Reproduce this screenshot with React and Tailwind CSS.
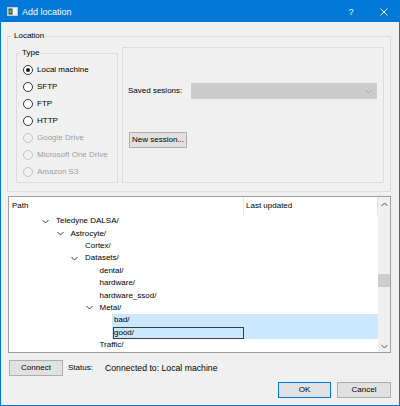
import React from "react";

const Chevron = ({ className = "", color = "#404040" }) => (
  <svg width="7" height="5" viewBox="0 0 7 5" className={className}>
    <polyline points="0.5,1 3.5,4 6.5,1" fill="none" stroke={color} strokeWidth="1" />
  </svg>
);

const ChevronUp = ({ color = "#404040" }) => (
  <svg width="7" height="5" viewBox="0 0 7 5">
    <polyline points="0.5,4 3.5,1 6.5,4" fill="none" stroke={color} strokeWidth="1" />
  </svg>
);

function Radio({ label, checked, disabled }) {
  return (
    <div className="flex h-[16.9px] items-center gap-[4px]">
      <span
        className={
          "flex h-[10px] w-[10px] items-center justify-center rounded-full border " +
          (disabled ? "border-[#c4c4c4]" : "border-[#333333] bg-white")
        }
      >
        {checked && <span className="h-[4px] w-[4px] rounded-full bg-[#1a1a1a]" />}
      </span>
      <span className={disabled ? "text-[#a0a0a0]" : "text-black"}>{label}</span>
    </div>
  );
}

const spacers = ["w-[33px]", "w-[47.5px]", "w-[62px]", "w-[76.5px]", "w-[91px]"];

const rows = [
  { level: 0, label: "Teledyne DALSA/", exp: true },
  { level: 1, label: "Astrocyte/", exp: true },
  { level: 2, label: "Cortex/" },
  { level: 2, label: "Datasets/", exp: true },
  { level: 3, label: "dental/" },
  { level: 3, label: "hardware/" },
  { level: 3, label: "hardware_ssod/" },
  { level: 3, label: "Metal/", exp: true },
  { level: 4, label: "bad/", sel: true },
  { level: 4, label: "good/", sel: true, edit: true },
  { level: 3, label: "Traffic/" },
];

export default function App() {
  return (
    <div className="flex h-[406px] w-[400px] flex-col border border-[#0078d7] bg-[#f0f0f0] font-['Liberation_Sans',Arial,sans-serif] text-[8px] leading-[10px] text-black">
      {/* Title bar */}
      <div className="flex h-[21px] shrink-0 items-center bg-[#0078d7] text-white">
        <svg width="11" height="9" viewBox="0 0 11 9" className="ml-[6px]">
          <rect x="0.5" y="0.5" width="10" height="8" fill="#e8e8e8" stroke="#c8c8c8" />
          <rect x="1.5" y="1.5" width="4" height="6" fill="#2f5d3a" />
          <rect x="2.5" y="3" width="2" height="3" fill="#6fae6f" />
          <rect x="6" y="1.5" width="3.5" height="6" fill="#f7f7f7" />
        </svg>
        <span className="ml-[4px] text-[9px] leading-[10px]">Add location</span>
        <div className="ml-auto flex items-center">
          <span className="mr-[13px] w-[10px] text-center text-[9px]">?</span>
          <span className="flex h-[21px] w-[30px] items-center justify-center">
            <svg width="8" height="8" viewBox="0 0 8 8">
              <path d="M0.5 0.5 L7.5 7.5 M7.5 0.5 L0.5 7.5" stroke="white" strokeWidth="1" />
            </svg>
          </span>
        </div>
      </div>

      {/* Location group */}
      <fieldset className="ml-[6px] mr-[8px] mt-[9px] min-w-0 border border-[#dcdcdc] px-0 pb-[8px] pt-[6px]">
        <legend className="ml-[4px] px-[2px] leading-[10px]">Location</legend>
        <div className="flex h-[136px] gap-[4px] pl-[8px] pr-[6px]">
          <fieldset className="mt-[1px] h-[135px] w-[102px] min-w-0 shrink-0 border border-[#dcdcdc] p-0">
            <legend className="ml-[3px] px-[2px] leading-[10px]">Type</legend>
            <div className="flex flex-col pl-[6px] pt-[4px]">
              <Radio label="Local machine" checked />
              <Radio label="SFTP" />
              <Radio label="FTP" />
              <Radio label="HTTP" />
              <Radio label="Google Drive" disabled />
              <Radio label="Microsoft One Drive" disabled />
              <Radio label="Amazon S3" disabled />
            </div>
          </fieldset>
          <div className="flex h-[136px] w-[262px] shrink-0 flex-col border border-[#dcdcdc] pl-[5px]">
            <div className="mt-[35px] flex h-[16px] items-center">
              <span className="w-[63px] shrink-0">Saved sesions:</span>
              <div className="flex h-[16px] w-[186px] items-center justify-end border border-[#cccccc] bg-[#cccccc] pr-[4px]">
                <Chevron color="#a8a8a8" />
              </div>
            </div>
            <button className="ml-[1px] mt-[33px] flex h-[16px] w-[58px] items-center justify-center border border-[#adadad] bg-[#e1e1e1] leading-[10px]">
              New session...
            </button>
          </div>
        </div>
      </fieldset>

      {/* Tree view */}
      <div className="ml-[7px] mr-[8px] mt-[4px] flex h-[157px] shrink-0 border border-[#a0a0a0] bg-white">
        <div className="flex min-w-0 flex-1 flex-col">
          <div className="flex h-[18px] shrink-0 items-center">
            <div className="flex h-full w-[235px] items-center border-r border-[#e5e5e5] pl-[3px]">Path</div>
            <div className="flex h-full flex-1 items-center border-r border-[#e5e5e5] pl-[2px]">Last updated</div>
          </div>
          {rows.map((r, i) => (
            <div key={i} className="flex h-[12.4px] shrink-0 items-center">
              <div className={spacers[r.level] + " h-full shrink-0"} />
              <div className="flex h-full w-[12px] shrink-0 items-center">
                {r.exp && <Chevron color="#3a3a3a" />}
              </div>
              <div className={"flex h-full flex-1 items-center " + (r.sel ? "bg-[#cce8ff]" : "")}>
                {r.edit ? (
                  <div className="ml-[1px] flex h-[12px] w-[131px] items-center border border-[#3c3c3c]">
                    {r.label}
                  </div>
                ) : (
                  <span className="pl-[2px]">{r.label}</span>
                )}
              </div>
            </div>
          ))}
        </div>
        <div className="flex w-[12px] shrink-0 flex-col bg-[#f0f0f0]">
          <div className="flex h-[15px] items-center justify-center">
            <ChevronUp color="#555555" />
          </div>
          <div className="h-[62px]" />
          <div className="h-[13px] bg-[#cdcdcd]" />
          <div className="flex-1" />
          <div className="flex h-[12px] items-center justify-center">
            <Chevron color="#555555" />
          </div>
        </div>
      </div>

      {/* Connect row */}
      <div className="ml-[8px] mt-[7px] flex h-[16px] items-center">
        <button className="flex h-[16px] w-[54px] items-center justify-center border border-[#adadad] bg-[#e1e1e1]">
          Connect
        </button>
        <span className="ml-[5px] w-[37px]">Status:</span>
        <span className="text-[8.7px]">Connected to: Local machine</span>
      </div>

      {/* OK / Cancel */}
      <div className="mr-[8px] mt-[6px] flex h-[16px] justify-end gap-[6px]">
        <button className="flex h-[16px] w-[53px] items-center justify-center border border-[#0078d7] bg-[#e1e1e1]">
          OK
        </button>
        <button className="flex h-[16px] w-[54px] items-center justify-center border border-[#adadad] bg-[#e1e1e1]">
          Cancel
        </button>
      </div>
    </div>
  );
}
